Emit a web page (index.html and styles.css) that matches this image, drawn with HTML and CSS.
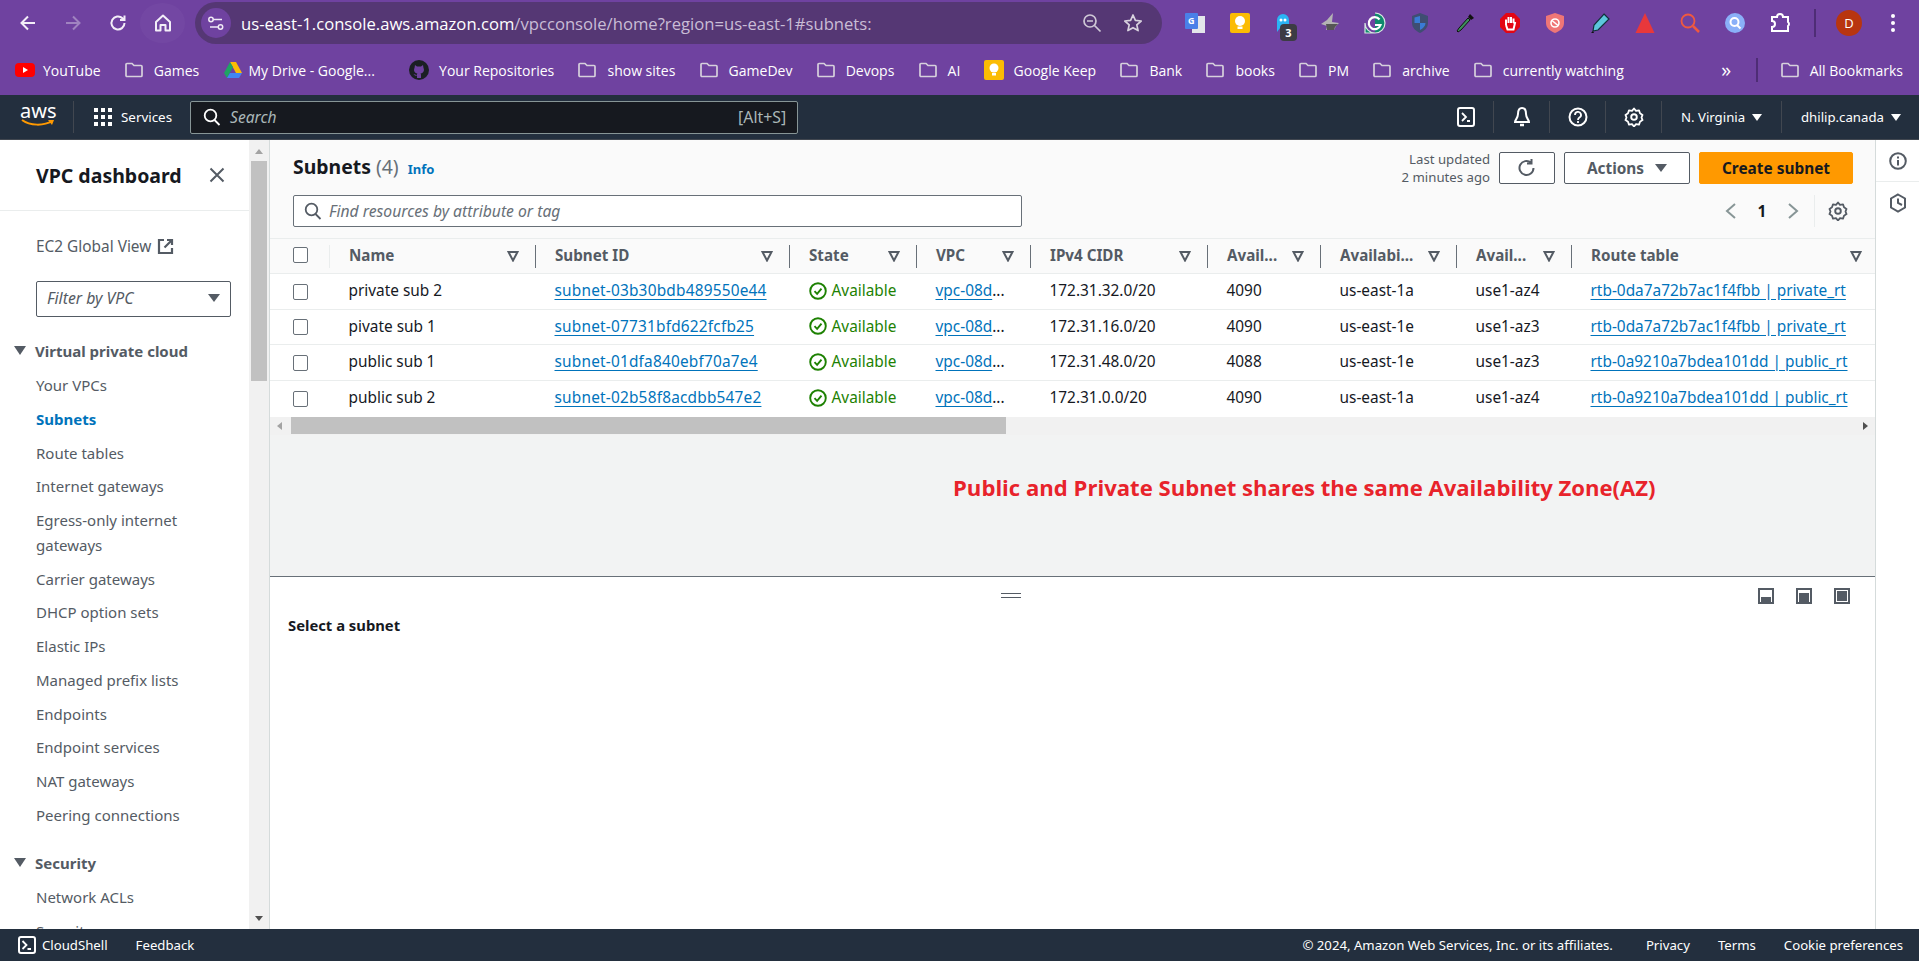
FILE: index.html
```html
<!DOCTYPE html>
<html lang="en">
<head>
    <meta charset="UTF-8">
    <title>Subnets | VPC Console</title>
    <link rel="stylesheet" href="styles.css">
</head>
<body>
    <svg class="defs" width="0" height="0">
        <symbol id="folder" viewBox="0 0 20 20"><path d="M2 4.5a1 1 0 0 1 1-1h5l2 2h7a1 1 0 0 1 1 1v9a1 1 0 0 1-1 1H3a1 1 0 0 1-1-1z" fill="none" stroke="#d6d0dc" stroke-width="1.7"/></symbol>
        <symbol id="sort" viewBox="0 0 12 12"><path d="M1.5 2h9L6 10.5z" fill="none" stroke="#545b64" stroke-width="2"/></symbol>
        <symbol id="ok" viewBox="0 0 18 18"><circle cx="9" cy="9" r="7.8" fill="none" stroke="#1d8102" stroke-width="1.9"/><path d="M5.5 9.2l2.6 2.6 4.4-5.2" fill="none" stroke="#1d8102" stroke-width="1.9"/></symbol>
        <symbol id="gear" viewBox="0 0 20 20"><circle cx="10" cy="10" r="2.8" fill="none" stroke="currentColor" stroke-width="1.9"/><path d="M10 1.5l2 2.4 3-.6 1 3 2.5 1.6-1 2.6 1 2.6-2.5 1.6-1 3-3-.6-2 2.4-2-2.4-3 .6-1-3-2.5-1.6 1-2.6-1-2.6 2.5-1.6 1-3 3 .6z" fill="none" stroke="currentColor" stroke-width="1.8" stroke-linejoin="round"/></symbol>
        <symbol id="panel" viewBox="0 0 16 16"><rect x="1" y="1" width="14" height="14" fill="#fff" stroke="#545b64" stroke-width="2"/></symbol>
    </svg>

    <header class="toolbar">
        <button class="tool"><svg width="20" height="20" viewBox="0 0 20 20"><path d="M17 10H4M10 3.5L3.5 10l6.5 6.5" fill="none" stroke="#f3eef8" stroke-width="2"/></svg></button>
        <button class="tool"><svg width="20" height="20" viewBox="0 0 20 20"><path d="M3 10h13M10 3.5l6.5 6.5-6.5 6.5" fill="none" stroke="#a083c0" stroke-width="2"/></svg></button>
        <button class="tool"><svg width="20" height="20" viewBox="0 0 20 20"><path d="M16.5 10a6.5 6.5 0 1 1-2-4.7L16.5 7M16.5 2.5V7H12" fill="none" stroke="#f3eef8" stroke-width="2"/></svg></button>
        <button class="tool tool-home"><svg width="20" height="20" viewBox="0 0 20 20"><path d="M3 9l7-6.5L17 9v8.5h-4.5V12h-5v5.5H3z" fill="none" stroke="#f3eef8" stroke-width="2" stroke-linejoin="round"/></svg></button>
        <div class="omnibox">
            <span class="site-info"><svg width="16" height="16" viewBox="0 0 16 16"><path d="M5 4.5h9M2 12h8" stroke="#f0eaf6" stroke-width="1.6"/><circle cx="3" cy="4.5" r="2.2" fill="#6f42a0" stroke="#f0eaf6" stroke-width="1.5"/><circle cx="12.5" cy="12" r="2.2" fill="#6f42a0" stroke="#f0eaf6" stroke-width="1.5"/></svg></span>
            <span class="url">us-east-1.console.aws.amazon.com<span class="url-path">/vpcconsole/home?region=us-east-1#subnets:</span></span>
            <svg class="omni-zoom" width="20" height="20" viewBox="0 0 20 20"><circle cx="8" cy="8" r="6" fill="none" stroke="#cfc8d6" stroke-width="1.7"/><path d="M5 8h6M12.5 12.5l6 6" stroke="#cfc8d6" stroke-width="1.7"/></svg>
            <svg class="omni-star" width="20" height="20" viewBox="0 0 20 20"><path d="M10 2l2.4 5.4 5.8.6-4.4 3.9 1.3 5.7L10 14.7l-5.1 2.9 1.3-5.7L1.8 8l5.8-.6z" fill="none" stroke="#d8d2de" stroke-width="1.7" stroke-linejoin="round"/></svg>
        </div>
        <div class="extensions">
            <svg class="ext" viewBox="0 0 22 22"><rect x="8" y="4" width="13" height="17" fill="#e3e6ea"/><rect x="1" y="1" width="13" height="16" rx="1" fill="#4a80e8"/><text x="4" y="12" class="ext-letter">G</text></svg>
            <svg class="ext" viewBox="0 0 22 22"><rect x="1" y="1" width="20" height="20" rx="2" fill="#fbbc04"/><circle cx="11" cy="9" r="5" fill="#fff"/><rect x="8.5" y="14.5" width="5" height="2.5" fill="#fff"/></svg>
            <span class="ext-ghost"><svg class="ext" viewBox="0 0 22 22"><path d="M3 20V8a6 6 0 0 1 12 0v10l-3-2-3 3-3-3z" fill="#2ab4f5"/><circle cx="7" cy="8" r="1.5" fill="#fff"/><circle cx="11" cy="8" r="1.5" fill="#fff"/></svg><span class="ext-badge">3</span></span>
            <svg class="ext" viewBox="0 0 22 22"><path d="M14 1l-1 9 7 1-3 3-2 4H7l1-4-6-2 6-4z" fill="#b4b4b4"/><path d="M7 12h12l-3 3-1 3H8z" fill="#555"/></svg>
            <svg class="ext" viewBox="0 0 22 22"><path d="M11 1a10 10 0 1 1-10 10v10h10" fill="#0f8a6d" stroke="#d8e6e2" stroke-width="1.2"/><path d="M15.5 7.5A6 6 0 1 0 16.5 13H11" fill="none" stroke="#fff" stroke-width="2.2"/></svg>
            <svg class="ext" viewBox="0 0 22 22"><path d="M11 1l8 3v7c0 5-4 8-8 10-4-2-8-5-8-10V4z" fill="#3f4e72"/><path d="M11 4v7H5.5V5.5zM11 11h5.5c0 3-2.5 5.5-5.5 7z" fill="#3a7bd5"/></svg>
            <svg class="ext" viewBox="0 0 22 22"><path d="M16 2l4 4-3 2-3-3z" fill="#111"/><path d="M14 6l2 2-9 10-3 2-1-1 2-3z" fill="#3c8f5a" stroke="#111"/></svg>
            <svg class="ext" viewBox="0 0 22 22"><path d="M7 1h8l6 6v8l-6 6H7l-6-6V7z" fill="#e30613"/><path d="M7 13V7.5M9.5 11V5M12 11V5M14.5 11V6.5M7 13l1.5 4.5h6L16 11l-1.5-.5" fill="none" stroke="#fff" stroke-width="2"/></svg>
            <svg class="ext" viewBox="0 0 22 22"><path d="M11 1l9 3v7c0 5-4 8-9 10-5-2-9-5-9-10V4z" fill="#ef7676"/><circle cx="11" cy="11" r="4" fill="none" stroke="#fff" stroke-width="1.6"/><path d="M8 8.5l6 5" stroke="#fff" stroke-width="1.6"/></svg>
            <svg class="ext" viewBox="0 0 22 22"><path d="M15 2l5 5L9 18l-5 1 1-6z" fill="#5cc6dc" stroke="#12303a" stroke-width="1.2"/><path d="M4 19l-2 2h3z" fill="#111"/></svg>
            <svg class="ext" viewBox="0 0 22 22"><path d="M11 1l9.5 20h-19z" fill="#e8383b"/></svg>
            <svg class="ext" viewBox="0 0 22 22"><circle cx="9" cy="9" r="6.5" fill="none" stroke="#f0593f" stroke-width="1.8"/><path d="M14 14l6 6" stroke="#f0593f" stroke-width="2.5"/></svg>
            <svg class="ext" viewBox="0 0 22 22"><circle cx="11" cy="11" r="10" fill="#8ab0f8"/><circle cx="10.5" cy="10" r="4" fill="none" stroke="#fff" stroke-width="2"/><path d="M13 13l3.5 3.5" stroke="#fff" stroke-width="2"/></svg>
            <svg class="ext" viewBox="0 0 22 22"><path d="M3 5h5a3 3 0 0 1 6 0h5v5a2.5 2.5 0 0 1 0 4v5H3v-4a3 3 0 0 0 0-6z" fill="none" stroke="#fff" stroke-width="2"/></svg>
        </div>
        <span class="toolbar-sep"></span>
        <span class="avatar">D</span>
        <span class="chrome-menu"><i></i><i></i><i></i></span>
    </header>

    <nav class="bookmarks">
        <a class="bm-tube"><svg class="bm-icon" viewBox="0 0 20 20"><rect x="0" y="3" width="20" height="14" rx="4" fill="#f00"/><path d="M8 7l5 3-5 3z" fill="#fff"/></svg>YouTube</a>
        <a><svg class="bm-icon"><use href="#folder"/></svg>Games</a>
        <a class="bm-drive"><svg class="bm-icon" viewBox="0 0 20 20"><path d="M7 2h6l6 11h-6z" fill="#fbbc04"/><path d="M7 2l-6 11 3 5 6-11z" fill="#1fa463"/><path d="M4 18h12l3-5H7z" fill="#4285f4"/></svg>My Drive - Google...</a>
        <a><svg class="bm-icon" viewBox="0 0 20 20"><circle cx="10" cy="10" r="10" fill="#1b1f23"/><path d="M6 5l2 1.5h4L14 5l.5 3c1 2 .5 5-3 5.5.5.5.5 1 .5 2V18H8v-2.5C6 16 5 15 4.5 14c1 0 1.5 1 3.5 1 0-1 0-1 .5-1.5-3.500-.5-4-3.500-3-5.500z" fill="#6f42a0"/></svg>Your Repositories</a>
        <a><svg class="bm-icon"><use href="#folder"/></svg>show sites</a>
        <a><svg class="bm-icon"><use href="#folder"/></svg>GameDev</a>
        <a><svg class="bm-icon"><use href="#folder"/></svg>Devops</a>
        <a><svg class="bm-icon"><use href="#folder"/></svg>AI</a>
        <a><svg class="bm-icon" viewBox="0 0 20 20"><rect x="0" y="0" width="20" height="20" rx="2" fill="#fbbc04"/><circle cx="10" cy="8" r="4.5" fill="#fff"/><rect x="8" y="13" width="4" height="2.5" fill="#fff"/></svg>Google Keep</a>
        <a><svg class="bm-icon"><use href="#folder"/></svg>Bank</a>
        <a><svg class="bm-icon"><use href="#folder"/></svg>books</a>
        <a><svg class="bm-icon"><use href="#folder"/></svg>PM</a>
        <a><svg class="bm-icon"><use href="#folder"/></svg>archive</a>
        <a><svg class="bm-icon"><use href="#folder"/></svg>currently watching</a>
        <span class="bm-more">&raquo;</span>
        <span class="bm-sep"></span>
        <a><svg class="bm-icon"><use href="#folder"/></svg>All Bookmarks</a>
    </nav>

    <nav class="topnav">
        <span class="aws-logo"><span class="aws-word">aws</span><svg width="36" height="9" viewBox="0 0 36 9"><path d="M2 1c8 6 22 6 30 1" fill="none" stroke="#f90" stroke-width="2"/><path d="M28 1h6l-2 5z" fill="#f90"/></svg></span>
        <a class="services"><span class="grid-icon"><i></i><i></i><i></i><i></i><i></i><i></i><i></i><i></i><i></i></span>Services</a>
        <div class="nav-search">
            <svg width="18" height="18" viewBox="0 0 18 18"><circle cx="7.5" cy="7.5" r="5.8" fill="none" stroke="#fff" stroke-width="1.8"/><path d="M11.5 12l5 5" stroke="#fff" stroke-width="1.8"/></svg>
            <span class="nav-search-text">Search</span>
            <span class="nav-search-key">[Alt+S]</span>
        </div>
        <div class="nav-right">
            <span class="nav-cell"><svg width="18" height="20" viewBox="0 0 18 20"><rect x="1" y="1" width="16" height="18" rx="2" fill="none" stroke="#fff" stroke-width="2"/><path d="M5 6l4 4-4 4M10 14h3" fill="none" stroke="#fff" stroke-width="1.8"/></svg></span>
            <span class="nav-cell"><svg width="20" height="22" viewBox="0 0 20 22"><path d="M10 2c-3 0-4 3-4 6 0 4-3 6-3 8h14c0-2-3-4-3-8 0-3-1-6-4-6z" fill="none" stroke="#fff" stroke-width="2"/><path d="M8 19h4" stroke="#fff" stroke-width="2.5"/></svg></span>
            <span class="nav-cell"><svg width="20" height="20" viewBox="0 0 20 20"><circle cx="10" cy="10" r="8.5" fill="none" stroke="#fff" stroke-width="2"/><path d="M7 8a3 3 0 1 1 4.5 2.5c-1 .7-1.5 1-1.5 2.5M10 14v2" fill="none" stroke="#fff" stroke-width="1.8"/></svg></span>
            <span class="nav-cell nav-gear"><svg width="20" height="20"><use href="#gear"/></svg></span>
            <span class="nav-cell nav-text nav-region">N. Virginia<i class="nav-caret"></i></span>
            <span class="nav-cell nav-text nav-user">dhilip.canada<i class="nav-caret"></i></span>
        </div>
    </nav>

    <div class="console">
        <aside class="sidebar">
            <div class="side-head">
                <h2>VPC dashboard</h2>
                <svg width="16" height="16" viewBox="0 0 16 16"><path d="M1.5 1.5l13 13M14.5 1.5l-13 13" stroke="#545b64" stroke-width="2"/></svg>
            </div>
            <div class="side-body">
                <a class="global-view">EC2 Global View
                    <svg width="17" height="17" viewBox="0 0 17 17"><path d="M7 2H2v13h13v-5" fill="none" stroke="#545b64" stroke-width="2.2"/><path d="M10 2h5v5M15 2L7.5 9.5" fill="none" stroke="#545b64" stroke-width="2.2"/></svg>
                </a>
                <div class="vpc-filter"><span>Filter by VPC</span><i></i></div>
                <h3 class="side-section"><i></i>Virtual private cloud</h3>
                <ul class="side-list">
                    <li>Your VPCs</li>
                    <li class="active">Subnets</li>
                    <li>Route tables</li>
                    <li>Internet gateways</li>
                    <li>Egress-only internet<br>gateways</li>
                    <li>Carrier gateways</li>
                    <li>DHCP option sets</li>
                    <li>Elastic IPs</li>
                    <li>Managed prefix lists</li>
                    <li>Endpoints</li>
                    <li>Endpoint services</li>
                    <li>NAT gateways</li>
                    <li>Peering connections</li>
                </ul>
                <h3 class="side-section side-section-next"><i></i>Security</h3>
                <ul class="side-list">
                    <li>Network ACLs</li>
                    <li>Security groups</li>
                </ul>
            </div>
        </aside>
        <div class="side-scroll">
            <i class="arrow-up"></i>
            <div class="side-thumb"></div>
            <i class="arrow-down"></i>
        </div>

        <main class="main">
            <section class="list-panel">
                <div class="list-head">
                    <div class="list-left">
                        <div class="list-title"><h1>Subnets <span class="count">(4)</span></h1><a class="info">Info</a></div>
                        <div class="find-box">
                            <svg width="18" height="18" viewBox="0 0 18 18"><circle cx="7.5" cy="7.5" r="5.8" fill="none" stroke="#545b64" stroke-width="1.8"/><path d="M11.5 12l5 5" stroke="#545b64" stroke-width="1.8"/></svg>
                            <span>Find resources by attribute or tag</span>
                        </div>
                    </div>
                    <div class="list-right">
                        <div class="list-actions">
                            <div class="updated">Last updated<br>2 minutes ago</div>
                            <button class="btn btn-refresh"><svg width="20" height="20" viewBox="0 0 20 20"><path d="M16.5 10a7 7 0 1 1-2.5-5.4M14.5 1v4.500H10" fill="none" stroke="#545b64" stroke-width="2"/></svg></button>
                            <button class="btn btn-actions">Actions<i></i></button>
                            <button class="btn btn-create">Create subnet</button>
                        </div>
                        <div class="pager">
                            <svg width="14" height="18" viewBox="0 0 14 18"><path d="M11 2L3 9l8 7" fill="none" stroke="#879596" stroke-width="2"/></svg>
                            <span class="page-num">1</span>
                            <svg width="14" height="18" viewBox="0 0 14 18"><path d="M3 2l8 7-8 7" fill="none" stroke="#879596" stroke-width="2"/></svg>
                            <span class="pager-gear"><svg width="20" height="20"><use href="#gear"/></svg></span>
                        </div>
                    </div>
                </div>

                <table class="subnets">
                    <colgroup>
                        <col class="c-check"><col class="c-name"><col class="c-id"><col class="c-state"><col class="c-vpc">
                        <col class="c-cidr"><col class="c-ips"><col class="c-az"><col class="c-azid"><col class="c-route">
                    </colgroup>
                    <thead>
                        <tr>
                            <th><div class="th-in th-check"><span class="check"></span></div></th>
                            <th><div class="th-in"><span>Name</span><svg class="sort"><use href="#sort"/></svg></div></th>
                            <th><div class="th-in"><span>Subnet ID</span><svg class="sort"><use href="#sort"/></svg></div></th>
                            <th><div class="th-in"><span>State</span><svg class="sort"><use href="#sort"/></svg></div></th>
                            <th><div class="th-in"><span>VPC</span><svg class="sort"><use href="#sort"/></svg></div></th>
                            <th><div class="th-in"><span>IPv4 CIDR</span><svg class="sort"><use href="#sort"/></svg></div></th>
                            <th><div class="th-in"><span>Avail...</span><svg class="sort"><use href="#sort"/></svg></div></th>
                            <th><div class="th-in"><span>Availabi...</span><svg class="sort"><use href="#sort"/></svg></div></th>
                            <th><div class="th-in"><span>Avail...</span><svg class="sort"><use href="#sort"/></svg></div></th>
                            <th><div class="th-in th-last"><span>Route table</span><svg class="sort"><use href="#sort"/></svg></div></th>
                        </tr>
                    </thead>
                    <tbody>
                        <tr>
                            <td class="td-check"><span class="check"></span></td>
                            <td>private sub 2</td>
                            <td class="td-id"><a>subnet-03b30bdb489550e44</a></td>
                            <td><span class="status"><svg width="18" height="18"><use href="#ok"/></svg>Available</span></td>
                            <td><a>vpc-08d</a>...</td>
                            <td>172.31.32.0/20</td>
                            <td>4090</td>
                            <td>us-east-1a</td>
                            <td>use1-az4</td>
                            <td><a>rtb-0da7a72b7ac1f4fbb | private_rt</a></td>
                        </tr>
                        <tr>
                            <td class="td-check"><span class="check"></span></td>
                            <td>pivate sub 1</td>
                            <td class="td-id"><a>subnet-07731bfd622fcfb25</a></td>
                            <td><span class="status"><svg width="18" height="18"><use href="#ok"/></svg>Available</span></td>
                            <td><a>vpc-08d</a>...</td>
                            <td>172.31.16.0/20</td>
                            <td>4090</td>
                            <td>us-east-1e</td>
                            <td>use1-az3</td>
                            <td><a>rtb-0da7a72b7ac1f4fbb | private_rt</a></td>
                        </tr>
                        <tr>
                            <td class="td-check"><span class="check"></span></td>
                            <td>public sub 1</td>
                            <td class="td-id"><a>subnet-01dfa840ebf70a7e4</a></td>
                            <td><span class="status"><svg width="18" height="18"><use href="#ok"/></svg>Available</span></td>
                            <td><a>vpc-08d</a>...</td>
                            <td>172.31.48.0/20</td>
                            <td>4088</td>
                            <td>us-east-1e</td>
                            <td>use1-az3</td>
                            <td><a>rtb-0a9210a7bdea101dd | public_rt</a></td>
                        </tr>
                        <tr>
                            <td class="td-check"><span class="check"></span></td>
                            <td>public sub 2</td>
                            <td class="td-id"><a>subnet-02b58f8acdbb547e2</a></td>
                            <td><span class="status"><svg width="18" height="18"><use href="#ok"/></svg>Available</span></td>
                            <td><a>vpc-08d</a>...</td>
                            <td>172.31.0.0/20</td>
                            <td>4090</td>
                            <td>us-east-1a</td>
                            <td>use1-az4</td>
                            <td><a>rtb-0a9210a7bdea101dd | public_rt</a></td>
                        </tr>
                    </tbody>
                </table>

                <div class="table-scroll">
                    <i class="arrow-left"></i>
                    <div class="table-thumb"></div>
                    <i class="arrow-right"></i>
                </div>

                <div class="note">Public and Private Subnet shares the same Availability Zone(AZ)</div>
            </section>

            <section class="detail-panel">
                <div class="detail-bar">
                    <span class="drag-handle"></span>
                    <div class="split-icons">
                        <svg width="16" height="16" viewBox="0 0 16 16"><use href="#panel"/><rect x="3" y="9" width="10" height="5" fill="#545b64"/></svg>
                        <svg width="16" height="16" viewBox="0 0 16 16"><use href="#panel"/><rect x="3" y="5" width="10" height="9" fill="#545b64"/></svg>
                        <svg width="16" height="16" viewBox="0 0 16 16"><use href="#panel"/><rect x="3" y="3" width="10" height="10" fill="#545b64"/></svg>
                    </div>
                </div>
                <h4 class="detail-title">Select a subnet</h4>
            </section>
        </main>

        <aside class="rail">
            <div class="rail-cell"><svg width="18" height="18" viewBox="0 0 18 18"><circle cx="9" cy="9" r="7.8" fill="none" stroke="#545b64" stroke-width="2"/><path d="M9 8v5.5M9 4.5v2" stroke="#545b64" stroke-width="2"/></svg></div>
            <div class="rail-cell"><svg width="18" height="20" viewBox="0 0 18 20"><path d="M9 1.5l7 4v9l-7 4-7-4v-9z" fill="none" stroke="#545b64" stroke-width="2"/><path d="M9 5.5V10l4 2" fill="none" stroke="#545b64" stroke-width="2"/></svg></div>
        </aside>
    </div>

    <footer class="footer">
        <a class="foot-shell"><svg width="18" height="18" viewBox="0 0 18 18"><rect x="1" y="1" width="16" height="16" rx="2" fill="none" stroke="#fff" stroke-width="2"/><path d="M4.5 5l4 4-4 4M9.5 13H13" fill="none" stroke="#fff" stroke-width="1.8"/></svg>CloudShell</a>
        <a class="foot-feedback">Feedback</a>
        <div class="foot-right">
            <span class="foot-copy">&copy; 2024, Amazon Web Services, Inc. or its affiliates.</span>
            <a>Privacy</a>
            <a>Terms</a>
            <a>Cookie preferences</a>
        </div>
    </footer>
</body>
</html>
```

FILE: styles.css
```css
* {
    margin: 0;
    padding: 0;
    box-sizing: border-box;
}

:root {
    --purple: #6f42a0;
    --pill: #553774;
    --squid: #232f3e;
    --ink: #16191f;
    --grey: #545b64;
    --line: #eaeded;
    --link: #0073bb;
    --ui-font: "Noto Sans", "Open Sans", sans-serif;
    --chrome-font: "Open Sans", "Noto Sans", sans-serif;
}

html, body {
    height: 961px;
    overflow: hidden;
}

body {
    display: flex;
    flex-direction: column;
    font-family: var(--ui-font);
    font-size: 15.4px;
    color: var(--ink);
    background-color: #fff;
}

.defs {
    position: absolute;
}

i {
    display: block;
}

a {
    cursor: pointer;
}

button {
    font-family: inherit;
    background: none;
    border: none;
}

/* browser chrome */
.toolbar {
    height: 47px;
    padding: 0 0 1px 5px;
    display: flex;
    align-items: center;
    background-color: var(--purple);
    font-family: var(--chrome-font);
}

.tool {
    width: 45px;
    height: 40px;
    display: flex;
    align-items: center;
    justify-content: center;
}

.tool-home {
    border-radius: 50%;
    background-color: rgba(255, 255, 255, 0.03);
}

.omnibox {
    width: 967px;
    height: 42px;
    margin-left: 10px;
    padding-left: 6px;
    display: flex;
    align-items: center;
    border-radius: 21px;
    background-color: var(--pill);
}

.site-info {
    width: 30px;
    height: 30px;
    display: flex;
    align-items: center;
    justify-content: center;
    border-radius: 50%;
    background-color: var(--purple);
}

.url {
    margin-left: 10px;
    font-size: 16.65px;
    color: #fff;
    white-space: nowrap;
}

.url-path {
    color: #c9bdd6;
}

.omni-zoom {
    margin-left: auto;
}

.omni-star {
    margin: 0 19px 0 21px;
}

.extensions {
    margin-left: 22px;
    display: flex;
    gap: 23px;
}

.ext {
    width: 22px;
    height: 22px;
    display: block;
}

.ext-letter {
    font-size: 9px;
    font-weight: 700;
    fill: #fff;
}

.ext-ghost {
    position: relative;
}

.ext-badge {
    position: absolute;
    left: 6px;
    top: 12px;
    width: 17px;
    height: 17px;
    border-radius: 4px;
    background-color: #3c3c44;
    color: #fff;
    font-size: 11px;
    font-weight: 700;
    line-height: 17px;
    text-align: center;
}

.toolbar-sep {
    width: 2px;
    height: 28px;
    margin-left: 23px;
    background-color: #4e2d75;
}

.avatar {
    width: 26px;
    height: 26px;
    margin-left: 20px;
    border-radius: 50%;
    background-color: #b8350f;
    color: #fff;
    font-size: 13px;
    line-height: 26px;
    text-align: center;
}

.chrome-menu {
    margin-left: 29px;
    display: flex;
    flex-direction: column;
    gap: 3px;
}

.chrome-menu i {
    width: 4px;
    height: 4px;
    border-radius: 50%;
    background-color: #fff;
}

.bookmarks {
    height: 48px;
    padding: 0 0 2px 15px;
    display: flex;
    align-items: center;
    gap: 23.25px;
    background-color: var(--purple);
    font-family: var(--chrome-font);
    font-size: 14px;
    color: #fff;
}

.bookmarks a {
    display: flex;
    align-items: center;
    gap: 10px;
    white-space: nowrap;
}

.bookmarks .bm-tube {
    gap: 8px;
}

.bookmarks .bm-drive {
    gap: 6px;
    margin-right: 11px;
}

.bm-icon {
    width: 20px;
    height: 20px;
    flex-shrink: 0;
}

.bm-more {
    margin-left: auto;
    margin-right: 4px;
    font-size: 20px;
    line-height: 20px;
}

.bm-sep {
    width: 2px;
    height: 24px;
    margin-left: -2px;
    background-color: #4e2d75;
}

.bookmarks a:last-child {
    margin-left: -2px;
    margin-right: 16px;
}

/* aws top bar */
.topnav {
    height: 45px;
    padding-left: 20px;
    display: flex;
    align-items: center;
    background-color: var(--squid);
    border-bottom: 1px solid #414750;
    color: #fff;
}

.aws-logo {
    width: 54px;
    height: 32px;
    display: flex;
    flex-direction: column;
    border-right: 1px solid #414750;
}

.aws-word {
    height: 21px;
    font-size: 20px;
    line-height: 19px;
}

.aws-logo svg {
    margin-top: -3px;
}

.services {
    margin-left: 20px;
    display: flex;
    align-items: center;
    gap: 9px;
    font-size: 13.4px;
}

.grid-icon {
    width: 18px;
    display: grid;
    grid-template-columns: repeat(3, 4px);
    gap: 3px;
}

.grid-icon i {
    height: 4px;
    background-color: #fff;
}

.nav-search {
    width: 608px;
    height: 33px;
    margin-left: 18px;
    padding: 0 11px 0 12px;
    display: flex;
    align-items: center;
    background-color: #16191f;
    border: 1px solid #879596;
    border-radius: 2px;
}

.nav-search-text {
    margin-left: 9px;
    font-size: 15.6px;
    font-style: italic;
    color: #aab7b8;
}

.nav-search-key {
    margin-left: auto;
    color: #aab7b8;
    font-size: 15.8px;
}

.nav-right {
    margin-left: auto;
    height: 100%;
    display: flex;
    align-items: center;
}

.nav-cell {
    width: 56px;
    height: 32px;
    display: flex;
    align-items: center;
    justify-content: center;
    border-right: 1px solid #414750;
}

.nav-gear {
    color: #fff;
}

.nav-text {
    justify-content: flex-start;
    padding-left: 19px;
    font-size: 13.2px;
    white-space: nowrap;
}

.nav-region {
    width: 120px;
}

.nav-user {
    width: 137px;
    border-right: none;
}

.nav-caret {
    margin-left: 7px;
    width: 0;
    height: 0;
    border-left: 5px solid transparent;
    border-right: 5px solid transparent;
    border-top: 7px solid #fff;
}

/* console layout */
.console {
    flex: 1;
    min-height: 0;
    display: grid;
    grid-template-columns: 249px 21px 1605px 44px;
}

.sidebar {
    overflow: hidden;
    background-color: #fff;
}

.side-head {
    height: 71px;
    padding: 0 24px 0 36px;
    display: flex;
    align-items: center;
    justify-content: space-between;
    border-bottom: 1px solid var(--line);
}

.side-head h2 {
    font-size: 19.5px;
    font-weight: 700;
}

.side-body {
    padding: 23px 0 0 36px;
    font-size: 15px;
    color: var(--grey);
}

.global-view {
    height: 24px;
    display: flex;
    align-items: center;
    gap: 6px;
    font-size: 15.4px;
}

.vpc-filter {
    width: 195px;
    height: 36px;
    margin-top: 23px;
    padding: 0 10px 2px;
    display: flex;
    align-items: center;
    justify-content: space-between;
    border: 1px solid var(--grey);
    border-radius: 2px;
    font-size: 15.8px;
    font-style: italic;
}

.vpc-filter i {
    border-left: 6px solid transparent;
    border-right: 6px solid transparent;
    border-top: 8px solid var(--grey);
}

.side-section {
    position: relative;
    height: 26px;
    margin-top: 21px;
    margin-left: -1px;
    font-size: 15px;
    font-weight: 700;
    line-height: 26px;
}

.side-section i {
    position: absolute;
    left: -21px;
    top: 8px;
    border-left: 6px solid transparent;
    border-right: 6px solid transparent;
    border-top: 9px solid var(--grey);
}

.side-section-next {
    margin-top: 18px;
}

.side-list {
    margin-top: 5px;
    list-style: none;
}

.side-list li {
    padding: 4.35px 0;
    line-height: 25px;
}

.side-list .active {
    color: var(--link);
    font-weight: 700;
}

.side-scroll {
    padding: 9px 2px 8px;
    display: flex;
    flex-direction: column;
    align-items: center;
    background-color: #f1f1f1;
    border-right: 1px solid #d5dbdb;
}

.side-thumb {
    width: 100%;
    height: 220px;
    margin-top: 7px;
    background-color: #c1c1c1;
}

.arrow-up {
    border-left: 4px solid transparent;
    border-right: 4px solid transparent;
    border-bottom: 5px solid #a3a3a3;
}

.arrow-down {
    margin-top: auto;
    border-left: 4px solid transparent;
    border-right: 4px solid transparent;
    border-top: 5px solid #505050;
}

.main {
    min-width: 0;
    display: flex;
    flex-direction: column;
}

.list-panel {
    height: 437px;
    display: flex;
    flex-direction: column;
    background-color: #f2f3f3;
    border-bottom: 1px solid #687078;
}

.list-head {
    height: 98px;
    padding: 12px 22px 0 23px;
    display: flex;
    justify-content: space-between;
    background-color: #fafafa;
}

.list-title {
    height: 32px;
    margin-bottom: 11px;
    display: flex;
    align-items: center;
    gap: 9px;
}

.list-title h1 {
    margin-bottom: 3px;
    font-size: 19.4px;
    font-weight: 700;
}

.count {
    font-weight: 400;
    color: #687078;
}

.info {
    margin-top: 2px;
    font-size: 13px;
    font-weight: 700;
    color: var(--link);
}

.find-box {
    width: 729px;
    height: 32px;
    padding: 0 10px;
    display: flex;
    align-items: center;
    gap: 7px;
    background-color: #fff;
    border: 1px solid #687078;
    border-radius: 2px;
    font-size: 15.7px;
    font-style: italic;
    color: #687078;
}

.list-actions {
    height: 32px;
    display: flex;
    align-items: center;
    gap: 9px;
}

.updated {
    font-size: 13.2px;
    line-height: 18px;
    text-align: right;
    color: var(--grey);
}

.btn {
    height: 32px;
    display: flex;
    align-items: center;
    justify-content: center;
    border: 1px solid var(--grey);
    border-radius: 2px;
    background-color: #fff;
    font-size: 15.4px;
    font-weight: 700;
    color: var(--grey);
}

.btn-refresh {
    width: 56px;
}

.btn-actions {
    width: 126px;
    gap: 11px;
}

.btn-actions i {
    border-left: 6px solid transparent;
    border-right: 6px solid transparent;
    border-top: 8px solid var(--grey);
}

.btn-create {
    width: 154px;
    background-color: #f90;
    border-color: #f90;
    color: var(--ink);
}

.pager {
    height: 32px;
    margin-top: 11px;
    display: flex;
    align-items: center;
    justify-content: flex-end;
}

.page-num {
    width: 48px;
    font-weight: 700;
    text-align: center;
}

.pager-gear {
    height: 32px;
    margin-left: 14px;
    padding-left: 13px;
    padding-right: 5px;
    display: flex;
    align-items: center;
    border-left: 1px solid var(--line);
    color: var(--grey);
}

.subnets {
    width: 1605px;
    table-layout: fixed;
    border-collapse: collapse;
    background-color: #fff;
}

.c-check { width: 60px; }
.c-name { width: 206px; }
.c-id { width: 254px; }
.c-state { width: 127px; }
.c-vpc { width: 114px; }
.c-cidr { width: 177px; }
.c-ips { width: 113px; }
.c-az { width: 136px; }
.c-azid { width: 115px; }
.c-route { width: 303px; }

.subnets thead tr {
    background-color: #fafafa;
    border-top: 1px solid var(--line);
    border-bottom: 1px solid var(--line);
}

.subnets th {
    height: 35px;
    padding: 0;
    text-align: left;
    font-size: 15.2px;
    font-weight: 700;
    color: var(--grey);
}

.th-in {
    height: 23px;
    padding: 0 16px 0 19px;
    display: flex;
    align-items: center;
    justify-content: space-between;
    border-right: 1px solid #687078;
    white-space: nowrap;
}

.th-in span {
    margin-bottom: 2px;
}

.th-check {
    padding-left: 23px;
    border-right-color: var(--line);
}

.th-last {
    border-right: none;
    padding-right: 13px;
}

.sort {
    width: 12px;
    height: 12px;
    flex-shrink: 0;
}

.subnets td {
    height: 36px;
    padding: 0 0 2px 18.5px;
    border-bottom: 1px solid var(--line);
    white-space: nowrap;
}

.subnets tbody tr:nth-child(2) td {
    height: 35px;
}

.subnets tbody tr:last-child td {
    border-bottom: none;
}

.subnets td.td-check {
    padding: 0 0 0 23px;
}

.subnets a {
    color: var(--link);
    text-decoration: underline;
    text-underline-offset: 3px;
}

.subnets .td-id a {
    letter-spacing: 0.2px;
}

.check {
    width: 15px;
    height: 16px;
    display: block;
    background-color: #fff;
    border: 1px solid #687078;
    border-radius: 2px;
}

.status {
    display: flex;
    align-items: center;
    gap: 5px;
    color: #1d8102;
}

.table-scroll {
    height: 18px;
    padding-right: 6px;
    display: flex;
    align-items: center;
    background-color: #f1f1f1;
}

.arrow-left {
    margin-left: 7px;
    border-top: 4px solid transparent;
    border-bottom: 4px solid transparent;
    border-right: 5px solid #a3a3a3;
}

.table-thumb {
    width: 715px;
    height: 17px;
    margin-left: 9px;
    background-color: #c1c1c1;
}

.arrow-right {
    margin-left: auto;
    margin-right: 1px;
    border-top: 4px solid transparent;
    border-bottom: 4px solid transparent;
    border-left: 5px solid #505050;
}

.note {
    padding: 37px 0 0 683px;
    font-family: "Open Sans", sans-serif;
    font-size: 22.1px;
    font-weight: 700;
    color: #e8232b;
    white-space: nowrap;
}

.detail-panel {
    flex: 1;
    background-color: #fff;
}

.detail-bar {
    height: 36px;
    padding: 2px 25px 0 0;
    display: flex;
    align-items: center;
    justify-content: flex-end;
    position: relative;
}

.drag-handle {
    position: absolute;
    left: 731px;
    top: 16px;
    width: 20px;
    height: 5px;
    border-top: 1px solid #545b64;
    border-bottom: 1px solid #545b64;
}

.split-icons {
    display: flex;
    gap: 22px;
}

.detail-title {
    margin: 0 0 0 18px;
    font-size: 14.8px;
    font-weight: 700;
    line-height: 24px;
}

.rail {
    background-color: #fff;
    border-left: 1px solid #d5dbdb;
}

.rail-cell {
    height: 42px;
    display: flex;
    align-items: center;
    justify-content: center;
    border-bottom: 1px solid var(--line);
}

.rail-cell:last-child {
    border-bottom: none;
}

/* footer */
.footer {
    height: 32px;
    padding: 0 16px 0 18px;
    display: flex;
    align-items: center;
    background-color: var(--squid);
    color: #fff;
    font-size: 13.2px;
}

.foot-shell {
    display: flex;
    align-items: center;
    gap: 6px;
}

.foot-feedback {
    margin-left: 28px;
}

.foot-right {
    margin-left: auto;
    display: flex;
    gap: 28px;
}

.foot-copy {
    margin-right: 5px;
}
```
